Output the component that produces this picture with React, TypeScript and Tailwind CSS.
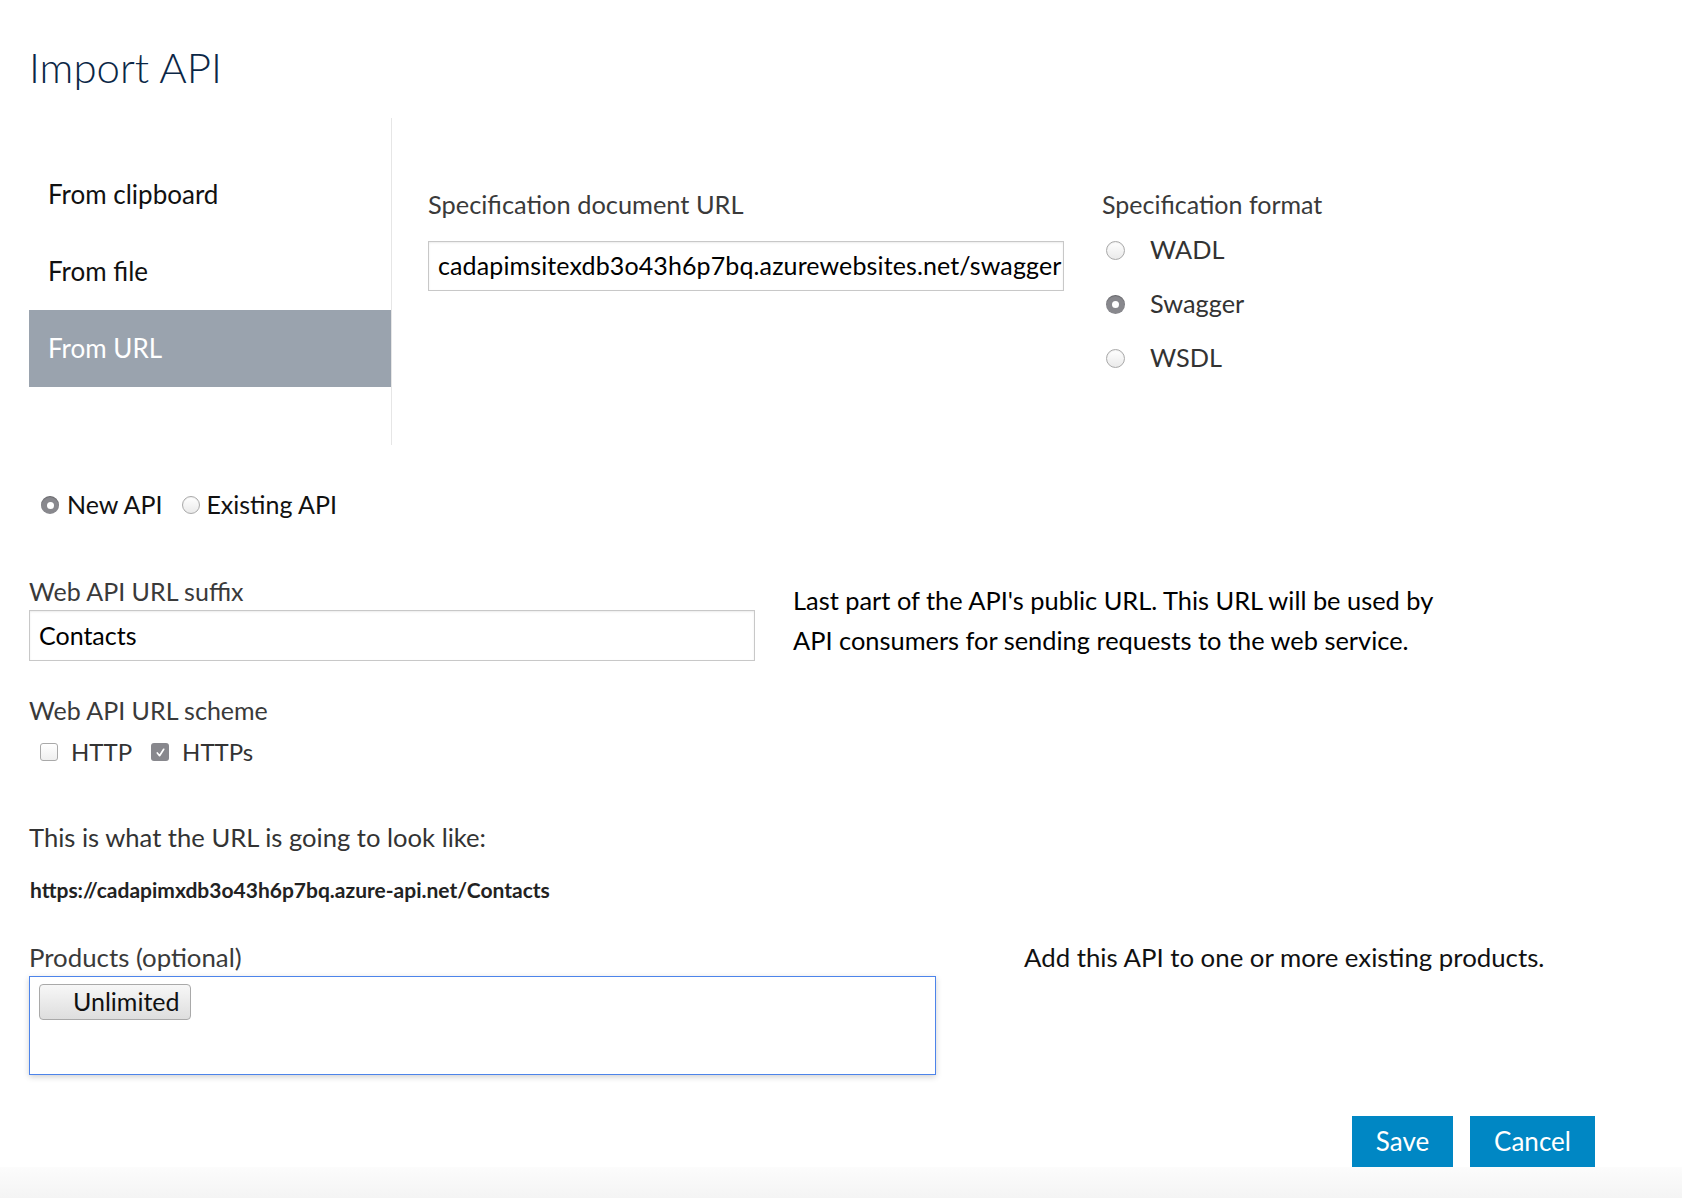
import { useState } from "react";

function Radio({ on, size = 19 }: { on?: boolean; size?: number }) {
  return (
    <span
      className={
        on
          ? "flex shrink-0 items-center justify-center rounded-full bg-[#88888d] shadow-[inset_0_1px_1px_rgba(0,0,0,0.25)]"
          : "flex shrink-0 items-center justify-center rounded-full border border-[#a9a9a9] bg-gradient-to-b from-white to-[#eaeaea] shadow-[inset_0_1px_1px_rgba(0,0,0,0.06)]"
      }
      style={{ width: size, height: size }}
    >
      {on && <span className="h-[7px] w-[7px] rounded-full bg-white" />}
    </span>
  );
}

function Check({ on }: { on?: boolean }) {
  return (
    <span
      className={
        on
          ? "flex h-[18px] w-[18px] shrink-0 items-center justify-center rounded-[3px] bg-[#88888d]"
          : "flex h-[18px] w-[18px] shrink-0 items-center justify-center rounded-[3px] border border-[#a9a9a9] bg-gradient-to-b from-white to-[#efefef]"
      }
    >
      {on && (
        <svg width="11" height="11" viewBox="0 0 12 12">
          <path d="M2.5 6.5 L5 9.5 L9.5 2.5" fill="none" stroke="white" strokeWidth="1.8" strokeLinecap="round" strokeLinejoin="round" />
        </svg>
      )}
    </span>
  );
}

export default function App() {
  const [tab, setTab] = useState("url");
  const [format, setFormat] = useState("swagger");
  const tabs = [
    { id: "clipboard", label: "From clipboard" },
    { id: "file", label: "From file" },
    { id: "url", label: "From URL" },
  ];
  const formats = [
    { id: "wadl", label: "WADL" },
    { id: "swagger", label: "Swagger" },
    { id: "wsdl", label: "WSDL" },
  ];

  return (
    <div className="min-h-[1198px] w-full bg-white font-['Lato',sans-serif] text-[25px] text-black">
      <div className="pl-[29px] pt-[45px]">
        <h1 className="h-[44px] text-[42px] font-light leading-[44px] text-[#0b2746]">Import API</h1>

        {/* source + spec */}
        <div className="mt-[29px] flex">
          <div className="h-[327px] w-[363px] border-r border-[#e6e6e6] pt-[38px]">
            {tabs.map((t) => (
              <div
                key={t.id}
                onClick={() => setTab(t.id)}
                className={
                  tab === t.id
                    ? "flex h-[77px] cursor-pointer items-center bg-[#9aa3ae] pl-[19px] text-[26px] text-white"
                    : "flex h-[77px] cursor-pointer items-center pl-[19px] text-[26px] text-[#111]"
                }
              >
                {t.label}
              </div>
            ))}
          </div>

          <div className="pl-[36px] pt-[71px]">
            <div className="h-[30px] text-[25.4px] leading-[30px] text-[#3a3a3a]">Specification document URL</div>
            <div className="mt-[22px] flex h-[50px] w-[636px] items-center overflow-hidden whitespace-nowrap border border-[#c8c8c8] pl-[9px] shadow-[inset_0_1px_2px_rgba(0,0,0,0.08)]">
              <span className="tracking-[0.12px]">cadapimsitexdb3o43h6p7bq.azurewebsites.net/swagger</span>
            </div>
          </div>

          <div className="pl-[38px] pt-[71px]">
            <div className="h-[30px] leading-[30px] text-[#3a3a3a]">Specification format</div>
            <div className="mt-[4px]">
              {formats.map((f) => (
                <div key={f.id} onClick={() => setFormat(f.id)} className="flex h-[54px] cursor-pointer items-center text-[25.3px] text-[#333]">
                  <span className="flex w-[48px] pl-[4px]">
                    <Radio on={format === f.id} />
                  </span>
                  {f.label}
                </div>
              ))}
            </div>
          </div>
        </div>

        {/* new / existing */}
        <div className="mt-[45px] flex h-[30px] items-center text-[25px] text-[#111]">
          <span className="ml-[12px] mr-[8px]">
            <Radio on size={18} />
          </span>
          New API
          <span className="ml-[20px] mr-[6px]">
            <Radio size={18} />
          </span>
          Existing API
        </div>

        {/* suffix */}
        <div className="mt-[56px] flex">
          <div className="w-[726px]">
            <div className="h-[30px] leading-[30px] text-[#3a3a3a]">Web API URL suffix</div>
            <div className="mt-[4px] flex h-[51px] items-center border border-[#c8c8c8] pl-[9px] shadow-[inset_0_1px_2px_rgba(0,0,0,0.08)]">
              Contacts
            </div>
          </div>
          <div className="ml-[38px] mt-[4px] text-[25.4px] leading-[40px]">
            Last part of the API's public URL. This URL will be used by
            <br />
            API consumers for sending requests to the web service.
          </div>
        </div>

        {/* scheme */}
        <div className="mt-[34px] h-[30px] leading-[30px] text-[#3a3a3a]">Web API URL scheme</div>
        <div className="mt-[12px] flex h-[30px] items-center text-[24px] text-[#333]">
          <span className="ml-[11px] mr-[13px]">
            <Check />
          </span>
          HTTP
          <span className="ml-[19px] mr-[13px]">
            <Check on />
          </span>
          HTTPs
        </div>

        <div className="mt-[55px] h-[30px] text-[25.6px] leading-[30px] text-[#333]">This is what the URL is going to look like:</div>
        <div className="ml-[1px] mt-[25px] h-[26px] text-[21px] font-bold leading-[26px] text-[#222]">
          https://cadapimxdb3o43h6p7bq.azure-api.net/Contacts
        </div>

        {/* products */}
        <div className="mt-[39px] flex">
          <div className="w-[907px]">
            <div className="h-[30px] text-[25.8px] leading-[30px] text-[#3a3a3a]">Products (optional)</div>
            <div className="mt-[4px] h-[99px] border border-[#4d84ea] pl-[9px] pt-[6px] shadow-[0_2px_6px_rgba(0,0,0,0.18)]">
              <span className="inline-flex h-[36px] items-center rounded-[4px] border border-[#a9a9a9] bg-gradient-to-b from-[#f7f7f7] to-[#dedede] pl-[33px] pr-[10px] text-[25px] text-[#111]">
                Unlimited
              </span>
            </div>
          </div>
          <div className="ml-[88px] h-[30px] text-[25.8px] leading-[30px] text-[#111]">Add this API to one or more existing products.</div>
        </div>
      </div>

      {/* actions */}
      <div className="mt-[41px] flex justify-end gap-[17px] pr-[87px]">
        <button className="h-[51px] w-[101px] bg-[#0087c4] text-[26px] text-white">Save</button>
        <button className="h-[51px] w-[125px] bg-[#0087c4] text-[26px] text-white">Cancel</button>
      </div>
      <div className="h-[31px] bg-gradient-to-b from-[#fcfcfc] to-[#f4f4f4]" />
    </div>
  );
}
